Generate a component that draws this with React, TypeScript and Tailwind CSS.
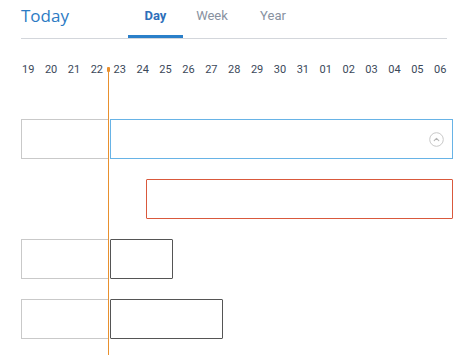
const days = ["19", "20", "21", "22", "23", "24", "25", "26", "27", "28", "29", "30", "31", "01", "02", "03", "04", "05", "06"];

function ChevronCircle() {
  return (
    <svg width="15" height="15" viewBox="0 0 15 15" fill="none">
      <circle cx="7.5" cy="7.5" r="6.8" stroke="#c8c8c8" strokeWidth="1" />
      <path d="M5.2 8.6 L7.5 6.4 L9.8 8.6" stroke="#b5b5b5" strokeWidth="1.1" strokeLinecap="round" strokeLinejoin="round" />
    </svg>
  );
}

export default function App() {
  return (
    <div className="relative w-[458px] h-[355px] bg-white overflow-hidden font-['Roboto',sans-serif]">
      {/* header */}
      <div className="ml-[21px] w-[426px] h-[39px] flex border-b border-[#d3d6db]">
        <div className="w-[107px] pt-[4px] text-[17px] leading-[24px] text-[#2b7bc4] font-['Open_Sans',sans-serif]">Today</div>
        <div className="relative w-[55px] pt-[6px] text-center text-[13px] font-bold leading-[20px] text-[#2e6fba]">
          Day
          <div className="absolute left-0 right-0 bottom-[0px] h-[3px] bg-[#2a7fc9]" />
        </div>
        <div className="w-[58px] pt-[6px] text-center text-[13px] leading-[20px] text-[#8891a0]">Week</div>
        <div className="w-[64px] pt-[6px] text-center text-[13px] leading-[20px] text-[#8891a0]">Year</div>
      </div>

      {/* date ruler */}
      <div className="mt-[23px] ml-[22px] flex text-[11px] leading-[16px] text-[#3b4859]">
        {days.map((d) => (
          <div key={d} className="w-[22.9px] shrink-0">{d}</div>
        ))}
      </div>

      {/* rows */}
      <div className="mt-[41px] ml-[21px] flex flex-col gap-[20px]">
        <div className="flex gap-[1px]">
          <div className="w-[88px] h-[40px] border border-[#c9c9c9]" />
          <div className="w-[343px] h-[40px] border border-[#67b3e6] flex items-center justify-end pr-[8px]">
            <ChevronCircle />
          </div>
        </div>
        <div className="flex">
          <div className="ml-[125px] w-[307px] h-[40px] border border-[#d9593c] rounded-[1px]" />
        </div>
        <div className="flex gap-[1px]">
          <div className="w-[88px] h-[40px] border border-[#c9c9c9]" />
          <div className="w-[63px] h-[40px] border border-[#555555] rounded-[1px]" />
        </div>
        <div className="flex gap-[1px]">
          <div className="w-[88px] h-[40px] border border-[#c9c9c9]" />
          <div className="w-[113px] h-[40px] border border-[#555555] rounded-[1px]" />
        </div>
      </div>

      {/* now marker */}
      <div className="absolute left-[107px] top-[67px] w-[3px] h-[5px] bg-[#e8902e] rounded-[1px]" />
      <div className="absolute left-[108px] top-[70px] bottom-0 w-[1px] bg-[#e8902e]" />
    </div>
  );
}
